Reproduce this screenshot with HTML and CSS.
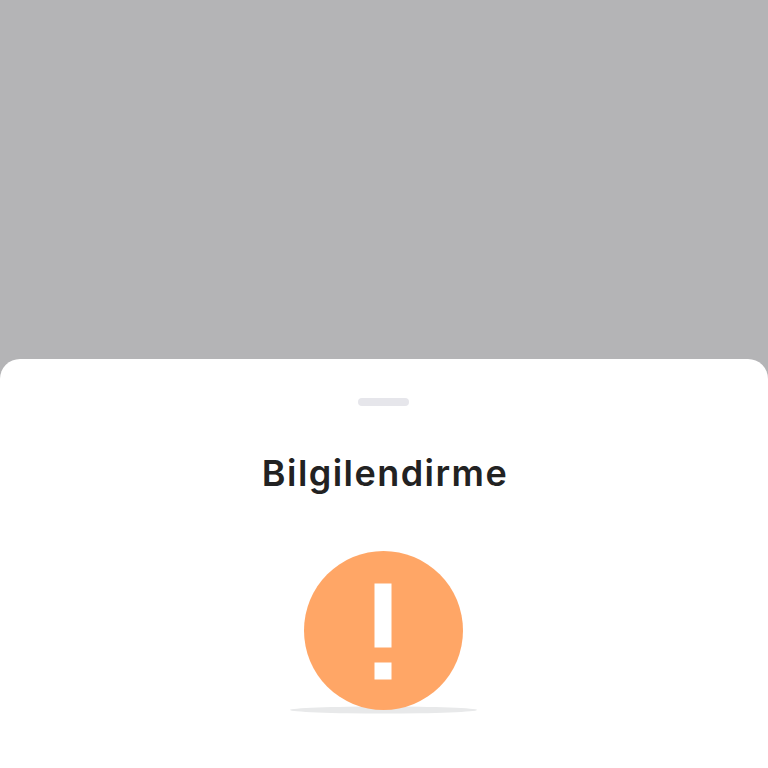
FILE: index.html
```html
<!DOCTYPE html>
<html lang="tr">
<head>
<meta charset="utf-8">
<title>Bilgilendirme</title>
<link rel="stylesheet" href="styles.css">
</head>
<body>
<div class="screen">
  <section class="sheet">
    <div class="handle"></div>
    <h1 class="title">Bilgilendirme</h1>
    <div class="illustration">
      <svg class="alert-icon" width="187" height="164" viewBox="0 0 187 164" aria-hidden="true">
        <ellipse cx="93.5" cy="159" rx="93.5" ry="3.5" fill="#e8e9ea"/>
        <circle cx="93.5" cy="79.5" r="79.5" fill="#ffa666"/>
        <rect x="84.5" y="32.5" width="17" height="64" fill="#fff"/>
        <rect x="84.5" y="111.5" width="17" height="17" fill="#fff"/>
      </svg>
    </div>
  </section>
</div>
</body>
</html>
```
FILE: styles.css
```css
html, body {
  margin: 0;
  padding: 0;
}
.screen {
  width: 768px;
  height: 768px;
  padding-top: 359px;
  box-sizing: border-box;
  background: #b4b4b6;
  overflow: hidden;
}
.sheet {
  height: 409px;
  background: #fff;
  border-radius: 20px 20px 0 0;
  display: flex;
  flex-direction: column;
  align-items: center;
  padding: 39px 1px 0 0;
  box-sizing: border-box;
}
.handle {
  width: 51px;
  height: 8px;
  border-radius: 4px;
  background: #e6e6eb;
}
.title {
  margin: 44px 0 0 3px;
  font-family: Inter, "Liberation Sans", sans-serif;
  font-size: 36px;
  font-weight: 600;
  line-height: 46px;
  color: #222222;
  letter-spacing: 1.45px;
}
.illustration {
  margin-top: 55px;
  display: flex;
}
.alert-icon {
  display: block;
}
```
